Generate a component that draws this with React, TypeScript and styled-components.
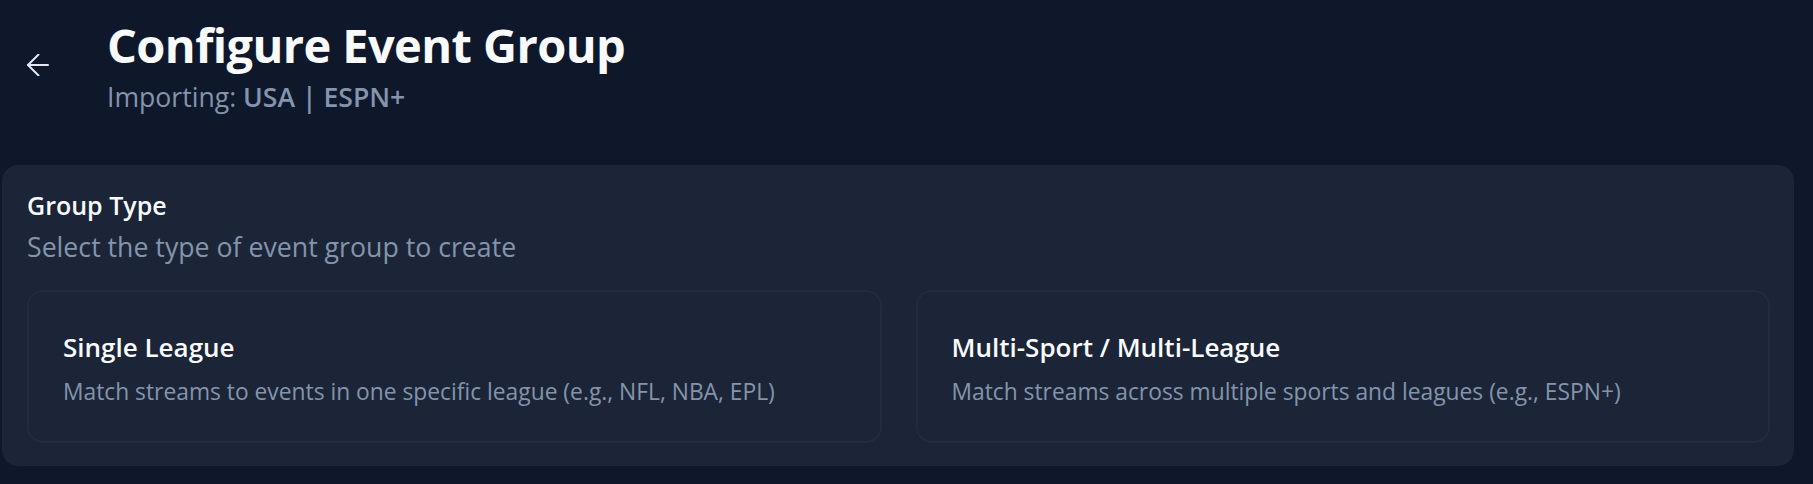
import styled, { createGlobalStyle } from 'styled-components';

const GlobalStyle = createGlobalStyle`
  html, body {
    margin: 0;
    padding: 0;
    background: #0f172a;
  }

  body {
    font-family: 'Open Sans', 'Noto Sans', sans-serif;
    color: #f8fafc;
  }
`;

const Page = styled.div`
  display: flex;
  flex-direction: column;
  width: 1792px;
  padding: 17px 0 19px 2px;
`;

const Header = styled.header`
  display: flex;
  align-items: center;
  padding-left: 25px;
`;

const BackButton = styled.button`
  display: flex;
  align-items: center;
  justify-content: center;
  width: 22px;
  height: 22px;
  margin-right: 58px;
  padding: 0;
  border: none;
  background: none;
  color: #e2e8f0;
  cursor: pointer;
`;

const HeaderText = styled.div`
  display: flex;
  flex-direction: column;
`;

const Title = styled.h1`
  margin: 0;
  font-size: 47px;
  line-height: 56px;
  font-weight: 700;
  letter-spacing: -0.6px;
  color: #f8fafc;
`;

const Subtitle = styled.p`
  margin: 8px 0 0;
  font-size: 26.6px;
  line-height: 32px;
  color: #8494ac;

  strong {
    font-weight: 600;
  }
`;

const Panel = styled.section`
  margin-top: 52px;
  padding: 24px 24px 23px 25px;
  border-radius: 16px;
  background: #1b2537;
`;

const PanelTitle = styled.h2`
  margin: 0;
  font-size: 25px;
  line-height: 32px;
  font-weight: 600;
  color: #f8fafc;
`;

const PanelHint = styled.p`
  margin: 10px 0 0;
  font-size: 26.7px;
  line-height: 32px;
  color: #8494ac;
`;

const Options = styled.div`
  display: grid;
  grid-template-columns: 1fr 1fr;
  gap: 34px;
  margin-top: 27px;
`;

const OptionCard = styled.button`
  display: flex;
  flex-direction: column;
  align-items: flex-start;
  height: 153px;
  box-sizing: border-box;
  padding: 39px 34px 0;
  border: 2px solid #222c3e;
  border-radius: 16px;
  background: #1b2537;
  font-family: inherit;
  text-align: left;
  cursor: pointer;
`;

const OptionTitle = styled.span`
  font-size: 26px;
  line-height: 32px;
  font-weight: 600;
  color: #f8fafc;
`;

const OptionText = styled.span`
  margin-top: 15px;
  font-size: 22.8px;
  line-height: 28px;
  color: #8494ac;
`;

const options = [
  {
    title: 'Single League',
    text: 'Match streams to events in one specific league (e.g., NFL, NBA, EPL)',
  },
  {
    title: 'Multi-Sport / Multi-League',
    text: 'Match streams across multiple sports and leagues (e.g., ESPN+)',
  },
];

function ArrowBack() {
  return (
    <svg width="22" height="22" viewBox="0 0 22 22" fill="none" stroke="currentColor" strokeWidth="2" strokeLinecap="round" strokeLinejoin="round">
      <path d="M21 11H1" />
      <path d="M11.5 0.5 1 11l10.5 10.5" />
    </svg>
  );
}

export default function App() {
  return (
    <>
      <GlobalStyle />
      <Page>
        <Header>
          <BackButton aria-label="Back">
            <ArrowBack />
          </BackButton>
          <HeaderText>
            <Title>Configure Event Group</Title>
            <Subtitle>
              Importing: <strong>USA | ESPN+</strong>
            </Subtitle>
          </HeaderText>
        </Header>

        <Panel>
          <PanelTitle>Group Type</PanelTitle>
          <PanelHint>Select the type of event group to create</PanelHint>
          <Options>
            {options.map((o) => (
              <OptionCard key={o.title}>
                <OptionTitle>{o.title}</OptionTitle>
                <OptionText>{o.text}</OptionText>
              </OptionCard>
            ))}
          </Options>
        </Panel>
      </Page>
    </>
  );
}
